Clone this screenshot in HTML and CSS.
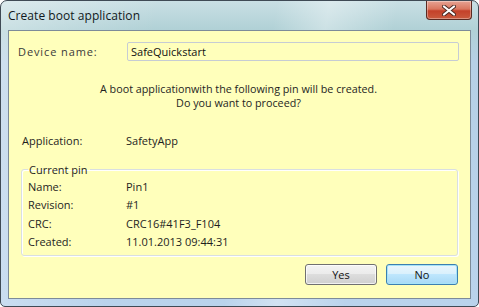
FILE: index.html
```html
<!DOCTYPE html>
<html>
<head>
<meta charset="utf-8">
<link rel="stylesheet" href="styles.css">
</head>
<body>
<div class="window">
  <div class="titlebar">
    <span class="title">Create boot application</span>
    <button class="close" aria-label="Close">
      <svg width="14" height="11" viewBox="0 0 14 11">
        <path d="M2 1.5 L12 9.5 M12 1.5 L2 9.5" stroke="#4a2a24" stroke-width="4" stroke-linecap="round"/>
        <path d="M2 1.5 L12 9.5 M12 1.5 L2 9.5" stroke="#ffffff" stroke-width="2.2" stroke-linecap="round"/>
      </svg>
    </button>
  </div>
  <div class="client">
    <div class="device-row">
      <span class="device-label">Device name:</span>
      <div class="textbox">SafeQuickstart</div>
    </div>
    <div class="message">
      <div>A boot applicationwith the following pin will be created.</div>
      <div>Do you want to proceed?</div>
    </div>
    <div class="app-row">
      <span class="label">Application:</span>
      <span class="value">SafetyApp</span>
    </div>
    <fieldset class="group">
      <legend>Current pin</legend>
      <div class="row"><span class="label">Name:</span><span class="value">Pin1</span></div>
      <div class="row"><span class="label">Revision:</span><span class="value">#1</span></div>
      <div class="row"><span class="label">CRC:</span><span class="value">CRC16#41F3_F104</span></div>
      <div class="row"><span class="label">Created:</span><span class="value">11.01.2013 09:44:31</span></div>
    </fieldset>
    <div class="buttons">
      <button class="btn">Yes</button>
      <button class="btn default">No</button>
    </div>
  </div>
</div>
</body>
</html>
```

FILE: styles.css
```css
html, body {
  margin: 0;
  padding: 0;
  background: #ffffff;
}

body {
  font-family: "Open Sans", "Noto Sans", sans-serif;
  font-size: 11px;
  color: #1e1e1e;
}

.window {
  width: 479px;
  height: 307px;
  box-sizing: border-box;
  border: 1px solid #3f4a55;
  border-radius: 7px 7px 5px 5px;
  background:
    linear-gradient(100deg, rgba(255,255,255,0.35) 0%, rgba(255,255,255,0) 30%, rgba(255,255,255,0) 52%, rgba(255,255,255,0.35) 62%, rgba(255,255,255,0) 75%),
    linear-gradient(to bottom, #c9dfe4 0px, #b1d1d6 28px, #b6d0e6 60px, #bad3ec 100%);
  display: flex;
  flex-direction: column;
  padding: 0 7px 7px 7px;
  overflow: hidden;
}

.titlebar {
  height: 29px;
  display: flex;
  justify-content: space-between;
  align-items: flex-start;
}

.title {
  font-size: 12px;
  color: #101820;
  margin-top: 6px;
  letter-spacing: 0.05px;
}

.close {
  width: 46px;
  height: 19px;
  margin-right: -1px;
  margin-top: 0;
  border: 1px solid #5a2a22;
  border-top: none;
  border-radius: 0 0 4px 4px;
  background: linear-gradient(to bottom, #e6a393 0%, #d9765f 45%, #c4412a 55%, #c95a3e 100%);
  box-shadow: inset 0 0 0 1px rgba(255,255,255,0.35);
  display: flex;
  align-items: center;
  justify-content: center;
  padding: 0;
}

.client {
  flex: 1;
  background: #ffffbb;
  border: 1px solid #7d8b99;
  display: flex;
  flex-direction: column;
  padding: 0 11px 0 9px;
}

.device-row {
  display: flex;
  align-items: center;
  margin-top: 10px;
  height: 21px;
}

.device-label {
  width: 109px;
  color: #3a3a3a;
  letter-spacing: 0.9px;
}

.textbox {
  flex: 1;
  height: 19px;
  box-sizing: border-box;
  border: 1px solid #c6ccd4;
  border-radius: 2px;
  background: #ffffbb;
  padding: 1px 3px;
  line-height: 15px;
  color: #111;
}

.message {
  text-align: center;
  margin-top: 20px;
  font-size: 10.75px;
  line-height: 14px;
  color: #1e1e1e;
}

.app-row {
  display: flex;
  margin-top: 23px;
  padding-left: 4px;
  line-height: 15px;
}

.label {
  width: 104px;
  flex: none;
}

.value {
  flex: none;
}

.group {
  margin: 15px 1px 0 3px;
  border: 1px solid #d9dfe1;
  border-radius: 3px;
  padding: 0 0 4px 6px;
  box-shadow: inset 1px 1px 0 #fff, 1px 1px 0 #fff;
}

.group legend {
  padding: 0 2px 0 1px;
  margin-left: 0;
  line-height: 13px;
}

.group .label {
  width: 98px;
}

.row {
  display: flex;
  height: 18.5px;
  align-items: center;
}

.row:first-of-type {
  margin-top: 1px;
}

.buttons {
  display: flex;
  justify-content: flex-end;
  gap: 9px;
  margin-top: 8px;
  padding-right: 1px;
}

.btn {
  width: 72px;
  height: 21px;
  box-sizing: border-box;
  border: 1px solid #707070;
  border-radius: 3px;
  background: linear-gradient(to bottom, #f3f3f3 0%, #ebebeb 49%, #dddddd 50%, #cfcfcf 100%);
  box-shadow: inset 0 0 0 1px rgba(255,255,255,0.7);
  font-family: "Open Sans", "Noto Sans", sans-serif;
  font-size: 11px;
  color: #111;
  padding: 0;
  line-height: 17px;
}

.btn.default {
  border-color: #3c7fb1;
  background: linear-gradient(to bottom, #eaf6fd 0%, #d9f0fc 49%, #bee6fd 50%, #a7d9f5 100%);
  box-shadow: inset 0 0 0 1px #a6e3f8;
}
```
